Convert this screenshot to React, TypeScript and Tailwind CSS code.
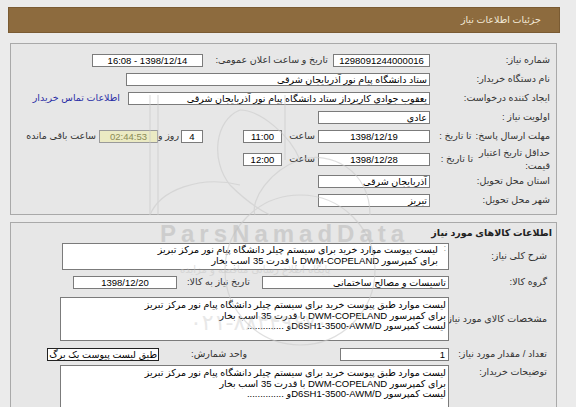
import React from 'react';

const F = ({ className = '', children }: { className?: string; children?: React.ReactNode }) => (
  <div
    className={`h-[13px] shrink-0 overflow-hidden whitespace-nowrap border border-[#7b7b7b] bg-white px-[2px] leading-[11px] text-black ${className}`}
  >
    {children}
  </div>
);

const TA = ({ className = '', lines }: { className?: string; lines: string[] }) => (
  <div
    className={`shrink-0 overflow-hidden border border-[#7b7b7b] bg-white pr-[2px] pt-[1px] leading-[10.5px] text-black ${className}`}
  >
    {lines.map((l, i) => (
      <div key={i} className="whitespace-nowrap">
        {l}
      </div>
    ))}
  </div>
);

const Row = ({
  label,
  className = 'h-[19px]',
  children,
}: {
  label: React.ReactNode;
  className?: string;
  children?: React.ReactNode;
}) => (
  <div className={`flex items-center ${className}`}>
    <div className="flex w-[126px] shrink-0 items-center whitespace-nowrap pr-[6px]">{label}</div>
    {children}
  </div>
);

const Row2 = ({
  label,
  className = 'h-[19px]',
  children,
}: {
  label: React.ReactNode;
  className?: string;
  children?: React.ReactNode;
}) => (
  <div className={`flex items-center ${className}`}>
    <div className="w-[107px] shrink-0 whitespace-nowrap pr-[9px]">{label}</div>
    {children}
  </div>
);

const l1 = 'لیست موارد طبق پیوست خرید برای سیستم چیلر دانشگاه پیام نور مرکز تبریز';
const l2 = 'برای کمپرسور DWM-COPELAND  با قدرت 35 اسب بخار';
const l3 = 'لیست کمپرسور D6SH1-3500-AWM/Dو ..............';

export default function App() {
  return (
    <div className="relative h-[407px] w-[576px] overflow-hidden bg-[#ebebeb] pt-[7px] font-['Liberation_Sans','DejaVu_Sans',sans-serif] text-[9.5px] text-[#333]">
      <div
        dir="rtl"
        className="ml-[8px] flex h-[26px] w-[552px] items-center border border-[#7a5b33] bg-[#8d6b3e] pr-[18px] text-[#f3ead8]"
      >
        جزئیات اطلاعات نیاز
      </div>

      {/* panel 1 */}
      <div dir="rtl" className="ml-[10px] mt-[10px] w-[547px] border border-[#a9a9a9] bg-[#e7e7e7] pb-[4px] pt-[7px]">
        <Row label="شماره نیاز:">
          <F className="w-[97px] text-center">1298091244000016</F>
          <span className="w-[130px] shrink-0 whitespace-nowrap pr-[5px]">تاریخ و ساعت اعلان عمومی:</span>
          <F className="w-[111px] text-center">1398/12/14 - 16:08</F>
        </Row>
        <Row label="نام دستگاه خریدار:">
          <F className="w-[304px]">ستاد دانشگاه پیام نور آذربایجان شرقی</F>
        </Row>
        <Row label="ایجاد کننده درخواست:">
          <F className="w-[302px]">یعقوب جوادی کاربرداز ستاد دانشگاه پیام نور آذربایجان شرقی</F>
          <span className="mr-[8px] whitespace-nowrap text-[#2b2fa6]">اطلاعات تماس خریدار</span>
        </Row>
        <Row label="اولویت نیاز :">
          <F className="w-[112px]">عادی</F>
        </Row>
        <Row
          label={
            <>
              <span>مهلت ارسال پاسخ:</span>
              <span className="mr-[4px]">تا تاریخ :</span>
            </>
          }
        >
          <F className="w-[112px] text-center">1398/12/19</F>
          <span className="w-[36px] shrink-0 pr-[3px]">ساعت</span>
          <F className="w-[39px] text-center">11:00</F>
          <F className="mr-[40px] w-[22px] text-center">4</F>
          <span className="w-[23px] shrink-0 whitespace-nowrap pr-[2px]">روز و</span>
          <div className="h-[13px] w-[59px] shrink-0 border border-[#9a9a9a] bg-[#ebeac3] text-center leading-[11px] text-[#8a8a55]">
            02:44:53
          </div>
          <span className="mr-[3px] whitespace-nowrap">ساعت باقی مانده</span>
        </Row>
        <Row
          className="h-[26px]"
          label={
            <>
              <span className="leading-[13px]">
                حداقل تاریخ اعتبار
                <br />
                قیمت:
              </span>
              <span className="mr-[6px]">تا تاریخ :</span>
            </>
          }
        >
          <F className="w-[112px] text-center">1398/12/28</F>
          <span className="w-[36px] shrink-0 pr-[3px]">ساعت</span>
          <F className="w-[39px] text-center">12:00</F>
        </Row>
        <Row label="استان محل تحویل:">
          <F className="w-[112px]">آذربایجان شرقی</F>
        </Row>
        <Row label="شهر محل تحویل:">
          <F className="w-[112px]">تبریز</F>
        </Row>
      </div>

      {/* panel 2 */}
      <div dir="rtl" className="ml-[10px] mt-[7px] w-[547px] border border-[#a9a9a9] bg-[#e7e7e7] pt-[2px]">
        <div className="mb-[2px] h-[16px] pr-[4px] font-bold leading-[16px] text-[#222]">اطلاعات کالاهای مورد نیاز</div>
        <Row2 label="شرح کلی نیاز:" className="h-[27px]">
          <div className="relative h-[27px] w-[387px] shrink-0 border border-[#7b7b7b] bg-white pr-[10px] pt-[1px] leading-[10.5px] text-black">
            <span className="absolute right-[2px] top-[1px] text-[7px] leading-[7px] text-[#555]">⁚</span>
            <div className="whitespace-nowrap">لیست پیوست موارد خرید برای سیستم چیلر دانشگاه پیام نور مرکز تبریز</div>
            <div className="whitespace-nowrap">{l2}</div>
          </div>
        </Row2>
        <Row2 label="گروه کالا:" className="h-[24px]">
          <F className="w-[187px]">تاسیسات و مصالح ساختمانی</F>
          <span className="w-[85px] shrink-0 whitespace-nowrap pr-[12px]">تاریخ نیاز به کالا:</span>
          <F className="w-[104px] text-center">1398/12/20</F>
        </Row2>
        <Row2 label="مشخصات کالای مورد نیاز:" className="mt-[3px] h-[44px]">
          <TA className="h-[44px] w-[389px] pt-[2px]" lines={[l1, l2, l3]} />
        </Row2>
        <Row2 label="تعداد / مقدار مورد نیاز:" className="mt-[2px] h-[22px]">
          <F className="w-[109px] pr-[3px]">1</F>
          <span className="w-[143px] shrink-0 whitespace-nowrap pr-[93px]">واحد شمارش:</span>
          <div className="mr-[38px] h-[13px] shrink-0 whitespace-nowrap border border-[#222] bg-white px-[1px] leading-[11px] text-black">
            طبق لیست پیوست یک برگ
          </div>
        </Row2>
        <Row2 label="توضیحات خریدار:" className="h-[56px] items-start">
          <TA className="h-[56px] w-[389px] pt-[2px]" lines={[l1, l2, l3]} />
        </Row2>
      </div>

      {/* watermark */}
      <div className="pointer-events-none absolute left-0 top-0 h-[407px] w-[576px]">
        <svg width="576" height="407" className="absolute left-0 top-0" fill="none" stroke="#cbcbcb" strokeWidth="1.2" opacity="0.6">
          <path d="M150 95 L150 215 M158 95 L158 215" />
          <path d="M285 95 L285 160" />
          <path d="M370 215 C370 170 330 150 300 160 C270 170 250 200 255 215" />
          <path d="M240 110 C215 120 210 160 230 185 C245 200 260 210 270 215" />
          <path d="M300 160 C290 135 260 110 240 110" />
          <path d="M150 215 C160 190 200 175 240 185" />
          <circle cx="300" cy="270" r="75" />
        </svg>
        <div className="absolute left-[160px] top-[216px] font-['Liberation_Sans',sans-serif] text-[24px] font-bold tracking-[5px] text-[#bdbdbd] opacity-60">
          ParsNamadData
        </div>
        <div dir="rtl" className="absolute left-[180px] top-[262px] font-['DejaVu_Sans',sans-serif] text-[10px] text-[#c4c4c4] opacity-50">
          پایگاه اطلاع رسانی مناقصه و مزایده
        </div>
        <div className="absolute left-[190px] top-[306px] font-['DejaVu_Sans',sans-serif] text-[22px] text-[#c8c8c8] opacity-40">
          ۰۲۱-۸۸۳۴۹۶۷۰
        </div>
      </div>
    </div>
  );
}
